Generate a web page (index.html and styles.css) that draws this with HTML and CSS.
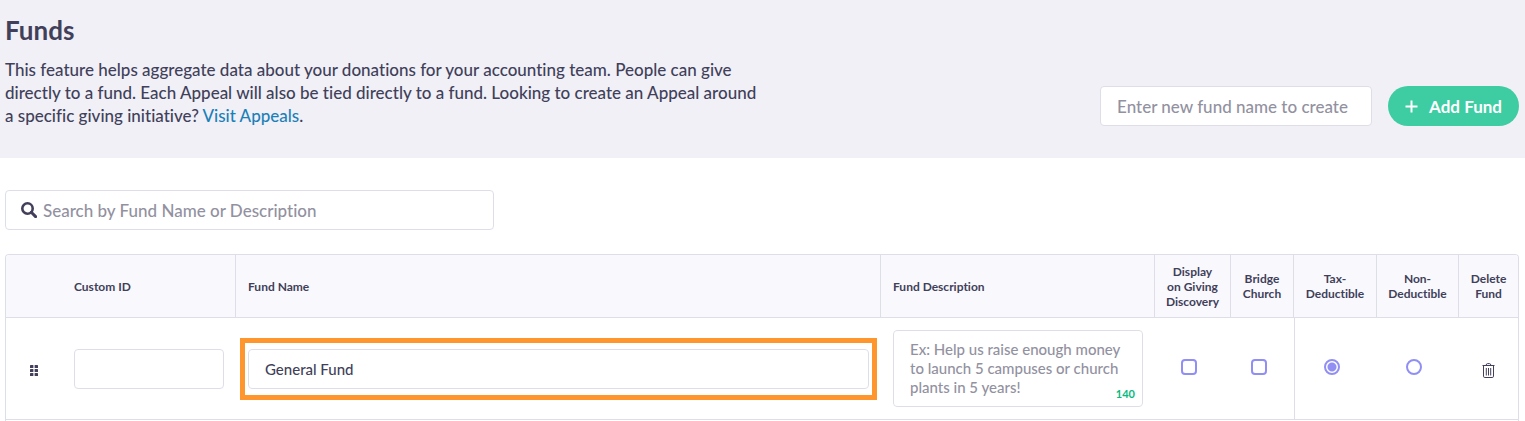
FILE: index.html
```html
<!DOCTYPE html>
<html lang="en">
 <head>
  <meta charset="utf-8">
  <title>Funds</title>
  <link rel="stylesheet" href="styles.css">
 </head>
 <body>
  <header class="page-header">
   <div class="intro">
    <h1>Funds</h1>
    <p>This feature helps aggregate data about your donations for your accounting team. People can give directly to a fund. Each Appeal will also be tied directly to a fund. Looking to create an Appeal around a specific giving initiative? <a href="#appeals">Visit Appeals</a>.</p>
   </div>
   <form class="add-fund">
    <input type="text" class="field new-fund" placeholder="Enter new fund name to create" aria-label="New fund name">
    <button type="button" class="add-button">
     <svg width="13" height="13" viewBox="0 0 13 13" aria-hidden="true"><path d="M6.500 0.500v12M0.500 6.500h12" fill="none" stroke="currentColor" stroke-width="2"/></svg>
     Add Fund
    </button>
   </form>
  </header>

  <main>
   <label class="field search">
    <svg width="16" height="16" viewBox="0 0 16 16" aria-hidden="true"><circle cx="6.500" cy="6.500" r="5.200" fill="none" stroke="currentColor" stroke-width="2.600"/><path d="M10.300 10.300l4.300 4.300" stroke="currentColor" stroke-width="3" stroke-linecap="round"/></svg>
    <input type="search" placeholder="Search by Fund Name or Description" aria-label="Search funds">
   </label>

   <div class="table-wrap">
    <table class="funds">
     <colgroup>
      <col class="col-drag"><col class="col-id"><col><col class="col-description"><col class="col-discovery"><col class="col-bridge"><col class="col-tax"><col class="col-non"><col class="col-delete">
     </colgroup>
     <thead>
      <tr>
       <th class="plain"></th>
       <th>Custom ID</th>
       <th>Fund Name</th>
       <th>Fund Description</th>
       <th class="center">Display<br>on Giving<br>Discovery</th>
       <th class="center">Bridge<br>Church</th>
       <th class="center">Tax-<br>Deductible</th>
       <th class="center">Non-<br>Deductible</th>
       <th class="center plain">Delete<br>Fund</th>
      </tr>
     </thead>
     <tbody>
      <tr>
       <td class="center">
        <button type="button" class="icon-button" aria-label="Reorder">
         <svg width="8" height="11" viewBox="0 0 8 11" fill="currentColor" aria-hidden="true"><rect width="3.400" height="3" rx="0.500"/><rect x="4.600" width="3.400" height="3" rx="0.500"/><rect y="4" width="3.400" height="3" rx="0.500"/><rect x="4.600" y="4" width="3.400" height="3" rx="0.500"/><rect y="8" width="3.400" height="3" rx="0.500"/><rect x="4.600" y="8" width="3.400" height="3" rx="0.500"/></svg>
        </button>
       </td>
       <td><input type="text" class="field row-field" aria-label="Custom ID"></td>
       <td><div class="highlight"><input type="text" class="field row-field" value="General Fund" aria-label="Fund name"></div></td>
       <td>
        <div class="description">
         <textarea class="field" rows="3" maxlength="140" placeholder="Ex: Help us raise enough money to launch 5 campuses or church plants in 5 years!" aria-label="Fund description"></textarea>
         <span class="count">140</span>
        </div>
       </td>
       <td class="center choice"><input type="checkbox" aria-label="Display on Giving Discovery"></td>
       <td class="center choice"><input type="checkbox" aria-label="Bridge Church"></td>
       <td class="center choice divided"><input type="radio" name="deductible" checked aria-label="Tax-Deductible"></td>
       <td class="center choice"><input type="radio" name="deductible" aria-label="Non-Deductible"></td>
       <td class="center">
        <button type="button" class="icon-button" aria-label="Delete fund">
         <svg width="13" height="15" viewBox="0 0 13 15" fill="none" stroke="currentColor" aria-hidden="true"><path d="M0.500 2.500h12M4.200 2.300q0-1.700 1.300-1.700h2q1.300 0 1.300 1.700M1.500 2.800v10.400q0 1.300 1.300 1.300h7.400q1.300 0 1.300-1.300V2.800M4.300 5v7.500M6.500 5v7.500M8.700 5v7.500"/></svg>
        </button>
       </td>
      </tr>
     </tbody>
    </table>
   </div>
  </main>
 </body>
</html>
```
FILE: styles.css
```css
* {
    box-sizing: border-box;
}

body {
    margin: 0;
    background: #fff;
    color: #413f5a;
    font-family: Lato, "Open Sans", sans-serif;
    font-size: 17px;
    font-weight: 500;
    font-variant-ligatures: none;
}

.page-header {
    display: flex;
    justify-content: space-between;
    align-items: flex-end;
    padding: 14px 6px 32px 5px;
    background: #f0f0f6;
}

.intro {
    max-width: 760px;
    margin-bottom: -1px;
}

h1 {
    margin: 0 0 12px;
    font-size: 26px;
    line-height: 32px;
    font-weight: 700;
}

.intro p {
    margin: 0;
    line-height: 23px;
}

a {
    color: #1c7fb8;
    text-decoration: none;
}

.add-fund {
    display: flex;
    gap: 16px;
}

.field {
    height: 40px;
    padding: 0 16px;
    border: 1px solid #dedee8;
    border-radius: 4px;
    background: #fff;
    color: #413f5a;
    font: inherit;
}

::placeholder {
    color: #92919f;
    opacity: 1;
}

.new-fund {
    width: 272px;
}

.add-button {
    display: flex;
    align-items: center;
    gap: 11px;
    height: 40px;
    padding: 0 17px;
    border: 0;
    border-radius: 20px;
    background: #3ecca2;
    color: #fff;
    font: inherit;
    font-weight: 700;
    white-space: nowrap;
}

main {
    padding: 32px 6px 0 5px;
}

.search {
    display: flex;
    align-items: center;
    gap: 6px;
    width: 489px;
    max-width: 100%;
    padding: 0 15px;
}

.search input {
    flex: 1;
    padding: 0;
    border: 0;
    outline: 0;
    background: none;
    font: inherit;
}

.table-wrap {
    margin-top: 24px;
    padding-bottom: 1px;
    border: 1px solid #dedee8;
    border-bottom: 0;
    border-radius: 4px 4px 0 0;
    overflow: hidden;
}

.funds {
    width: 100%;
    table-layout: fixed;
    border-collapse: separate;
    border-spacing: 0;
}

.col-drag { width: 56px; }
.col-id { width: 174px; }
.col-description { width: 274px; }
.col-discovery { width: 76px; }
.col-bridge { width: 63px; }
.col-tax { width: 83px; }
.col-non { width: 82px; }
.col-delete { width: 59px; }

th {
    height: 63px;
    padding: 0 0 0 12px;
    border-right: 1px solid #dedee8;
    border-bottom: 1px solid #dedee8;
    background: #f9f9fd;
    font-size: 12px;
    line-height: 15px;
    font-weight: 700;
    text-align: left;
}

th.plain {
    border-right: 0;
}

td {
    padding: 12px;
    border-bottom: 1px solid #dedee8;
    font-size: 15px;
}

th.center,
td.center {
    padding-right: 0;
    padding-left: 0;
    text-align: center;
}

td.divided {
    border-left: 1px solid #dedee8;
}

td.center.choice {
    padding-right: 8px;
    padding-bottom: 18px;
}

.row-field {
    display: block;
    width: 100%;
}

.highlight,
.description {
    position: relative;
}

.highlight::after {
    content: "";
    position: absolute;
    inset: -11px -8px;
    border: 5px solid #ff962d;
    pointer-events: none;
}

.description textarea {
    display: block;
    width: 100%;
    height: 77px;
    padding: 9px 16px;
    line-height: 19px;
    resize: none;
    overflow: hidden;
}

.count {
    position: absolute;
    right: 8px;
    bottom: 6px;
    color: #06b980;
    font-size: 11px;
    line-height: 15px;
    font-weight: 700;
}

input[type="checkbox"],
input[type="radio"] {
    appearance: none;
    display: inline-block;
    width: 16px;
    height: 16px;
    margin: 0;
    border: 2px solid #918ff4;
    border-radius: 4px;
    vertical-align: middle;
}

input[type="radio"] {
    border-radius: 50%;
}

input[type="radio"]:checked {
    background: radial-gradient(circle, #918ff4 4px, #fff 5px);
}

.icon-button {
    padding: 0;
    border: 0;
    background: none;
    color: #413f5a;
    vertical-align: middle;
}

.icon-button svg {
    display: block;
}
```
